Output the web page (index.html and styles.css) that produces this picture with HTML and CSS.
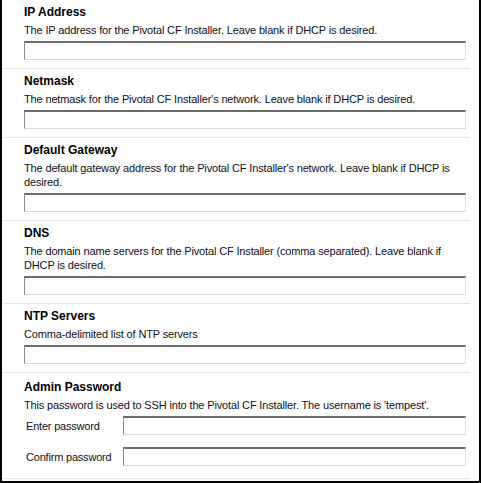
FILE: index.html
```html
<!DOCTYPE html>
<html>
<head>
<meta charset="utf-8">
<link rel="stylesheet" href="styles.css">
</head>
<body>
<div class="panel">
  <div class="section">
    <div class="title">IP Address</div>
    <div class="desc">The IP address for the Pivotal CF Installer. Leave blank if DHCP is desired.</div>
    <input class="field" type="text">
  </div>
  <div class="section">
    <div class="title">Netmask</div>
    <div class="desc">The netmask for the Pivotal CF Installer's network. Leave blank if DHCP is desired.</div>
    <input class="field" type="text">
  </div>
  <div class="section">
    <div class="title">Default Gateway</div>
    <div class="desc">The default gateway address for the Pivotal CF Installer's network. Leave blank if DHCP is desired.</div>
    <input class="field" type="text">
  </div>
  <div class="section">
    <div class="title">DNS</div>
    <div class="desc">The domain name servers for the Pivotal CF Installer (comma separated). Leave blank if DHCP is desired.</div>
    <input class="field" type="text">
  </div>
  <div class="section">
    <div class="title">NTP Servers</div>
    <div class="desc">Comma-delimited list of NTP servers</div>
    <input class="field" type="text">
  </div>
  <div class="section section-last">
    <div class="title">Admin Password</div>
    <div class="desc">This password is used to SSH into the Pivotal CF Installer. The username is 'tempest'.</div>
    <div class="pw-grid">
      <label class="pw-label">Enter password</label>
      <input class="field" type="password">
      <label class="pw-label">Confirm password</label>
      <input class="field" type="password">
    </div>
  </div>
</div>
</body>
</html>
```

FILE: styles.css
```css
html, body {
  margin: 0;
  padding: 0;
  background: #ffffff;
}
body {
  width: 481px;
  height: 483px;
  overflow: hidden;
  font-family: "Liberation Sans", Arial, sans-serif;
  color: #111111;
}
.panel {
  box-sizing: border-box;
  width: 481px;
  height: 483px;
  border-left: 2px solid #000;
  border-right: 2px solid #000;
  border-bottom: 2px solid #000;
  background: #fff;
  display: flex;
  flex-direction: column;
}
.section {
  margin: 0 9px 0 1px;
  padding: 5px 4px 8px 21px;
  border-bottom: 1px solid #e3e3e3;
  display: flex;
  flex-direction: column;
}
.title {
  font-size: 12px;
  font-weight: bold;
  line-height: 14px;
  color: #000;
}
.desc {
  font-size: 11px;
  letter-spacing: -0.15px;
  line-height: 14px;
  margin-top: 4px;
  margin-bottom: 4px;
  color: #101020;
}
.field {
  box-sizing: border-box;
  display: block;
  width: 100%;
  height: 19px;
  margin: 0;
  padding: 0;
  background: #fff;
  border-style: solid;
  border-width: 2px 1px 1px 1px;
  border-top-color: #6e6e6e;
  border-left-color: #8a8a8a;
  border-right-color: #dcdcdc;
  border-bottom-color: #dcdcdc;
  outline: none;
}
.section-last {
  padding-top: 7px;
  padding-bottom: 12px;
}
.pw-grid {
  display: grid;
  grid-template-columns: 99px 1fr;
  row-gap: 12px;
  align-items: center;
}
.pw-label {
  padding-left: 2px;
  font-size: 11px;
  letter-spacing: -0.2px;
  color: #101020;
}
```
